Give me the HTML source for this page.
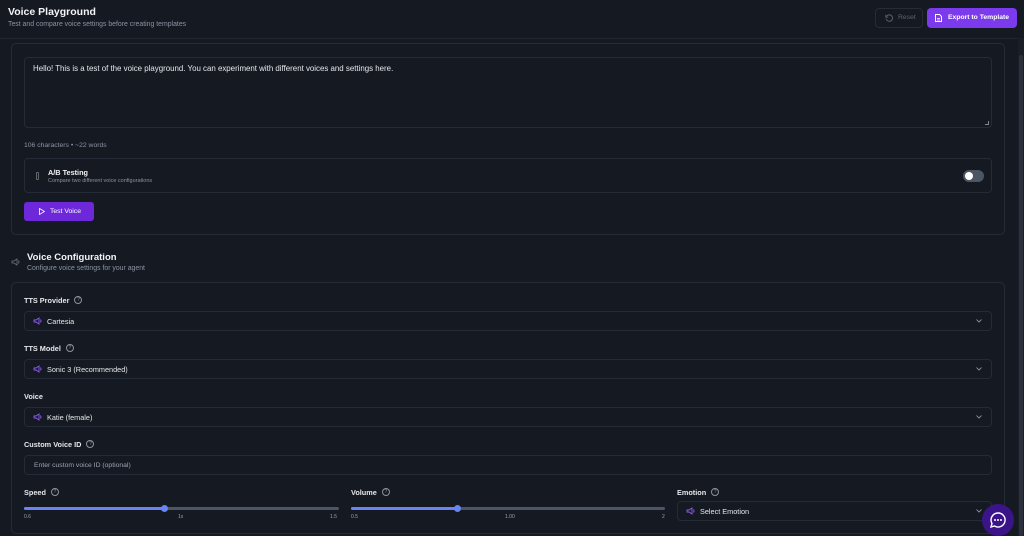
<!DOCTYPE html>
<html><head><meta charset="utf-8"><style>
*{box-sizing:border-box;margin:0;padding:0}
body{width:1024px;height:536px;overflow:hidden;background:#151a22;font-family:"Liberation Sans",sans-serif;color:#e5e7eb;position:relative}
.a{position:absolute}
.bx{position:absolute;border:1px solid #262c37;border-radius:5px}
.t{font-size:7.9px;color:#e5e7eb}
.s{font-size:6.5px;color:#8b93a1}
.lbl{position:absolute;font-size:7.3px;font-weight:bold;color:#e5e7eb;display:flex;align-items:center;height:10px}
.q{display:inline-block;width:8px;height:8px;border:1px solid #8b93a1;border-radius:50%;margin-left:5px;font-size:5px;text-align:center;line-height:6px;color:#8b93a1;font-weight:normal}
.sel{position:absolute;left:24px;width:968px;height:20px;border:1px solid #262c37;border-radius:4px;font-size:7.3px;color:#e5e7eb;padding-left:22px;display:flex;align-items:center}
.sel svg.sp{position:absolute;left:8px;top:5px}
.chev{position:absolute;right:9px;top:7px}
</style></head><body>
<div class="a" style="left:8px;top:6px;font-size:10.5px;font-weight:bold;color:#f3f4f6">Voice Playground</div>
<div class="a s" style="left:8px;top:21px;font-size:6.9px">Test and compare voice settings before creating templates</div>
<div class="a" style="left:875px;top:8px;width:48px;height:20px;border:1px solid #262c37;border-radius:4px;font-size:6.8px;color:#5b6270;line-height:18px;padding-left:22px">Reset
<svg class="a" style="left:9px;top:5px" width="8" height="8" viewBox="0 0 10 10"><path d="M2 3A4 4 0 1 1 1.5 6" fill="none" stroke="#5b6270" stroke-width="1.2"/><path d="M1 1v3h3" fill="none" stroke="#5b6270" stroke-width="1.2"/></svg></div>
<div class="a" style="left:927px;top:8px;width:90px;height:20px;background:#7c3aed;border-radius:4px;font-size:6.8px;color:#fff;line-height:20px;padding-left:21px;font-weight:bold">Export to Template
<svg class="a" style="left:8px;top:6px" width="7" height="8" viewBox="0 0 7 8"><path d="M.5.5h4l2 2v5h-6z" fill="none" stroke="#fff"/><path d="M2 4.5h3M2 6h3" stroke="#fff" stroke-width=".7"/></svg></div>
<div class="a" style="left:0;top:38px;width:1018px;height:1px;background:#222833"></div>
<div class="a" style="left:1018px;top:38px;width:6px;height:498px;background:#1a1f27"></div>
<div class="a" style="left:1019px;top:55px;width:4px;height:481px;background:#2b313c;border-radius:2px"></div>

<div class="bx" style="left:11px;top:43px;width:994px;height:192px"></div>
<div class="bx" style="left:24px;top:57px;width:968px;height:71px;border-radius:4px"></div>
<div class="a t" style="left:33px;top:64px">Hello! This is a test of the voice playground. You can experiment with different voices and settings here.</div>
<div class="a" style="left:985px;top:121px;width:4px;height:4px;border-right:1px solid #888;border-bottom:1px solid #888"></div>
<div class="a s" style="left:24px;top:142px;font-size:6.8px">106 characters • ~22 words</div>
<div class="bx" style="left:24px;top:158px;width:968px;height:35px;border-radius:4px"></div>
<div class="a" style="left:36px;top:172px;width:3px;height:8px;border:1px solid #666;border-radius:1px"></div>
<div class="a" style="left:48px;top:168px;font-size:7.3px;font-weight:bold;color:#f3f4f6">A/B Testing</div>
<div class="a" style="left:48px;top:178px;font-size:5.5px;color:#8b93a1">Compare two different voice configurations</div>
<div class="a" style="left:963px;top:170px;width:21px;height:12px;background:#4b5563;border-radius:6px"><div class="a" style="left:2px;top:2px;width:8px;height:8px;background:#fff;border-radius:50%"></div></div>
<div class="a" style="left:24px;top:202px;width:70px;height:19px;background:#6d28d9;border-radius:3px;font-size:6.8px;color:#fff;line-height:19px;padding-left:26px">Test Voice
<svg class="a" style="left:15px;top:6px" width="6" height="7" viewBox="0 0 6 7"><path d="M.5.5l5 3-5 3z" fill="none" stroke="#fff" stroke-width=".8"/></svg></div>

<svg class="a" style="left:11px;top:258px" width="10" height="8" viewBox="0 0 10 8"><path d="M1 3h2l3-2v6l-3-2H1z M7.5 2.5q1 1.5 0 3" fill="none" stroke="#6b7280" stroke-width=".8"/></svg>
<div class="a" style="left:27px;top:252px;font-size:9.5px;font-weight:bold;color:#f3f4f6">Voice Configuration</div>
<div class="a s" style="left:27px;top:265px;font-size:6.9px">Configure voice settings for your agent</div>

<div class="bx" style="left:11px;top:282px;width:994px;height:252px"></div>
<div class="lbl" style="left:24px;top:295px">TTS Provider<span class="q">?</span></div>
<div class="sel" style="top:311px"><svg class="sp" width="10" height="8" viewBox="0 0 10 8"><path d="M1 3h2l3-2v6l-3-2H1z M7.5 2.5q1 1.5 0 3" fill="none" stroke="#8b5cf6" stroke-width=".9"/></svg>Cartesia<svg class="chev" width="6" height="4" viewBox="0 0 6 4"><path d="M.5.5l2.5 2.5 2.5-2.5" fill="none" stroke="#9ca3af" stroke-width=".8"/></svg></div>
<div class="lbl" style="left:24px;top:343px">TTS Model<span class="q">?</span></div>
<div class="sel" style="top:359px"><svg class="sp" width="10" height="8" viewBox="0 0 10 8"><path d="M1 3h2l3-2v6l-3-2H1z M7.5 2.5q1 1.5 0 3" fill="none" stroke="#8b5cf6" stroke-width=".9"/></svg>Sonic 3 (Recommended)<svg class="chev" width="6" height="4" viewBox="0 0 6 4"><path d="M.5.5l2.5 2.5 2.5-2.5" fill="none" stroke="#9ca3af" stroke-width=".8"/></svg></div>
<div class="lbl" style="left:24px;top:391px">Voice</div>
<div class="sel" style="top:407px"><svg class="sp" width="10" height="8" viewBox="0 0 10 8"><path d="M1 3h2l3-2v6l-3-2H1z M7.5 2.5q1 1.5 0 3" fill="none" stroke="#8b5cf6" stroke-width=".9"/></svg>Katie (female)<svg class="chev" width="6" height="4" viewBox="0 0 6 4"><path d="M.5.5l2.5 2.5 2.5-2.5" fill="none" stroke="#9ca3af" stroke-width=".8"/></svg></div>
<div class="lbl" style="left:24px;top:439px">Custom Voice ID<span class="q">?</span></div>
<div class="sel" style="top:455px;padding-left:9px;color:#9ca3af;font-size:6.8px">Enter custom voice ID (optional)</div>

<div class="lbl" style="left:24px;top:487px">Speed<span class="q">?</span></div>
<div class="a" style="left:24px;top:507px;width:315px;height:3px;background:#4b5563;border-radius:2px"><div style="width:140px;height:3px;background:#6a83f5;border-radius:2px"></div></div>
<div class="a" style="left:161px;top:505px;width:7px;height:7px;background:#6a83f5;border-radius:50%"></div>
<div class="a" style="left:24px;top:514px;font-size:5px;color:#9ca3af">0.6</div>
<div class="a" style="left:178px;top:514px;font-size:5px;color:#9ca3af">1x</div>
<div class="a" style="left:330px;top:514px;font-size:5px;color:#9ca3af">1.5</div>

<div class="lbl" style="left:351px;top:487px">Volume<span class="q">?</span></div>
<div class="a" style="left:351px;top:507px;width:314px;height:3px;background:#4b5563;border-radius:2px"><div style="width:106px;height:3px;background:#6a83f5;border-radius:2px"></div></div>
<div class="a" style="left:454px;top:505px;width:7px;height:7px;background:#6a83f5;border-radius:50%"></div>
<div class="a" style="left:351px;top:514px;font-size:5px;color:#9ca3af">0.5</div>
<div class="a" style="left:505px;top:514px;font-size:5px;color:#9ca3af">1.00</div>
<div class="a" style="left:662px;top:514px;font-size:5px;color:#9ca3af">2</div>

<div class="lbl" style="left:677px;top:487px">Emotion<span class="q">?</span></div>
<div class="sel" style="left:677px;top:501px;width:315px"><svg class="sp" width="10" height="8" viewBox="0 0 10 8"><path d="M1 3h2l3-2v6l-3-2H1z M7.5 2.5q1 1.5 0 3" fill="none" stroke="#8b5cf6" stroke-width=".9"/></svg>Select Emotion<svg class="chev" width="6" height="4" viewBox="0 0 6 4"><path d="M.5.5l2.5 2.5 2.5-2.5" fill="none" stroke="#9ca3af" stroke-width=".8"/></svg></div>

<div class="a" style="left:982px;top:504px;width:32px;height:32px;background:#3b148a;border-radius:50%"></div>
<svg class="a" style="left:989px;top:511px" width="18" height="18" viewBox="0 0 18 18"><path d="M9 2a7 7 0 1 1-3.5 13L2 16l1-3.5A7 7 0 0 1 9 2z" fill="none" stroke="#fff" stroke-width="1.4"/><circle cx="6" cy="9" r="1" fill="#fff"/><circle cx="9" cy="9" r="1" fill="#fff"/><circle cx="12" cy="9" r="1" fill="#fff"/></svg>
</body></html>
